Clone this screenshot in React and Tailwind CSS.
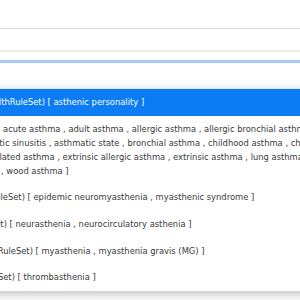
import React from 'react';

const rows = [
  { active: true, lines: [{ cls: '-ml-[21px]', text: '(HealthRuleSet) [ asthenic personality ]' }] },
  {
    lines: [
      { cls: 'ml-[3px]', text: 'acute asthma , adult asthma , allergic asthma , allergic bronchial asthma , asthmatic bronchitis' },
      { cls: '-ml-[32px]', text: 'asthmatic sinusitis , asthmatic state , bronchial asthma , childhood asthma , chronic asthma' },
      { cls: '-ml-[9px]', text: 'related asthma , extrinsic allergic asthma , extrinsic asthma , lung asthma ,' },
      { cls: 'ml-[1px]', text: ', wood asthma ]' },
    ],
  },
  { lines: [{ cls: '-ml-[41px]', text: '(HealthRuleSet) [ epidemic neuromyasthenia , myasthenic syndrome ]' }] },
  { lines: [{ cls: '-ml-[59px]', text: '(HealthRuleSet) [ neurasthenia , neurocirculatory asthenia ]' }] },
  { lines: [{ cls: '-ml-[33px]', text: '(HealthRuleSet) [ myasthenia , myasthenia gravis (MG) ]' }] },
  { lines: [{ cls: '-ml-[51px]', text: '(HealthRuleSet) [ thrombasthenia ]' }] },
];

function Row({ row }) {
  return (
    <div className={row.active ? 'bg-[#0b7cf4] text-white py-[6.3px]' : 'text-[#383838] py-[6.3px]'}>
      {row.lines.map((l, i) => (
        <div key={i} className={'whitespace-nowrap leading-[14px] ' + l.cls}>{l.text}</div>
      ))}
    </div>
  );
}

export default function App() {
  return (
    <div className="w-[300px] h-[300px] overflow-hidden bg-white text-[9.3px] font-['DejaVu_Sans_Condensed','DejaVu_Sans',sans-serif]">
      <div className="h-[28px]" />
      <div className="h-px bg-[#dcdcdc]" />
      <div className="h-[21px]" />
      <div className="h-[2px] bg-[#ececf0]" />
      <div className="h-[8px]" />
      <div className="h-[3px] bg-[#a8c9f2]" />
      <div className="h-[25px]" />
      <div className="-mx-[20px] px-[20px] border-t border-[#e6e6e6] bg-white shadow-[0_3px_10px_rgba(0,0,0,0.25)]">
        {rows.map((r, i) => <Row key={i} row={r} />)}
      </div>
    </div>
  );
}
